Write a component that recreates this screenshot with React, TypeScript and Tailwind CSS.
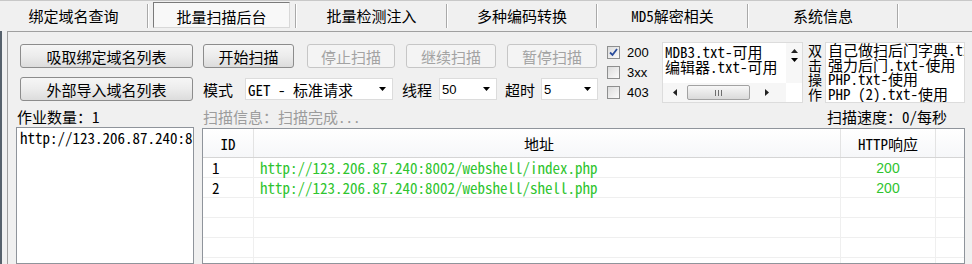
import React from 'react';

const CJK = "font-['Noto_Sans_CJK_SC',sans-serif]";
const MONO = "font-['Noto_Sans_Mono_CJK_SC','Liberation_Mono','Noto_Sans_CJK_SC',monospace]";
const SANS = "font-['Liberation_Sans','Noto_Sans_CJK_SC',sans-serif]";

function Sep() {
  return <div className="w-[2px] my-[3px] border-l border-[#a9a9a9] border-r border-r-white" />;
}

function Tab({ w, children }: { w: string; children: React.ReactNode }) {
  return (
    <div className={`${w} flex items-center justify-center pb-[2px] text-[15px] leading-none`}>{children}</div>
  );
}

function Btn({ children, disabled, w }: { children: React.ReactNode; disabled?: boolean; w: string }) {
  return (
    <div
      className={`${w} h-[24px] shrink-0 flex items-center justify-center rounded-[3px] border text-[15px] leading-none ${
        disabled
          ? 'border-[#c6c6c6] text-[#a3a3a3] bg-[#f4f4f4]'
          : 'border-[#8c8c8c] text-black bg-linear-to-b from-[#f6f6f6] via-[#ececec] to-[#dcdcdc]'
      }`}
    >
      {children}
    </div>
  );
}

function Arrow({ dir }: { dir: 'down' | 'up' | 'left' | 'right' }) {
  if (dir === 'down')
    return (
      <svg width="7" height="4" viewBox="0 0 7 4">
        <path d="M0 0H7L3.5 4Z" fill="#000" />
      </svg>
    );
  if (dir === 'up')
    return (
      <svg width="7" height="4" viewBox="0 0 7 4">
        <path d="M0 4H7L3.5 0Z" fill="#222" />
      </svg>
    );
  if (dir === 'left')
    return (
      <svg width="4" height="7" viewBox="0 0 4 7">
        <path d="M4 0V7L0 3.5Z" fill="#222" />
      </svg>
    );
  return (
    <svg width="4" height="7" viewBox="0 0 4 7">
      <path d="M0 0V7L4 3.5Z" fill="#222" />
    </svg>
  );
}

function Sel({ w, children, font }: { w: string; children: React.ReactNode; font: string }) {
  return (
    <div className={`${w} h-[22px] shrink-0 bg-white border border-[#dcdcdc] flex items-center pl-[2px] pr-[6px]`}>
      <span className={`flex-1 whitespace-nowrap ${font}`}>{children}</span>
      <Arrow dir="down" />
    </div>
  );
}

function Check({ checked, label }: { checked?: boolean; label: string }) {
  return (
    <div className="h-[20.5px] flex items-center">
      <div className="w-[13px] h-[13px] border border-[#8e8f8f] bg-linear-to-br from-[#dcdcdc] to-[#fbfbfb] flex items-center justify-center">
        {checked && (
          <svg width="9" height="9" viewBox="0 0 9 9">
            <path d="M1 4.5L3.5 7L8 1" stroke="#2a4d9c" strokeWidth="1.8" fill="none" />
          </svg>
        )}
      </div>
      <span className={`ml-[7px] text-[13px] leading-none ${SANS}`}>{label}</span>
    </div>
  );
}

export default function App() {
  return (
    <div className={`w-[972px] h-[264px] bg-[#f0f0f0] overflow-hidden flex flex-col ${CJK} text-black`}>
      {/* tab bar */}
      <div className="h-[31px] shrink-0 flex border-t border-[#c8c8c8]">
        <Tab w="w-[147px]">绑定域名查询</Tab>
        <Sep />
        <div className="w-[146px] pl-[4px] pt-[1px]">
          <div className="w-[137px] h-[26px] border-t border-l border-[#7a7a7a] border-r border-b border-r-[#d8d8d8] border-b-[#d8d8d8] bg-[#f8f8f8] flex items-center justify-center pt-[2px] text-[15px] leading-none">
            批量扫描后台
          </div>
        </div>
        <Sep />
        <Tab w="w-[149px]">批量检测注入</Tab>
        <Sep />
        <Tab w="w-[148px]">多种编码转换</Tab>
        <Sep />
        <Tab w="w-[149px]">
          <span className={MONO}>MD5</span>解密相关
        </Tab>
        <Sep />
        <Tab w="w-[148px]">系统信息</Tab>
        <Sep />
      </div>

      {/* body */}
      <div className="flex-1 min-h-0 flex">
        <div className="w-[2px] bg-[#56616c]" />
        <div className="w-[5px]" />
        <div className="flex-1 min-w-0 border-l border-t border-[#a0a0a0] pt-[10px] pl-[8px] flex flex-col">
          {/* top region */}
          <div className="h-[61px] shrink-0 flex">
            <div className="w-[178px] shrink-0 flex flex-col pt-[2px] pl-[4px] pr-[1px] gap-[9px]">
              <Btn w="w-full">吸取绑定域名列表</Btn>
              <Btn w="w-full">外部导入域名列表</Btn>
            </div>
            <div className="ml-[9px] w-[395px] shrink-0 flex flex-col pt-[2px]">
              <div className="flex">
                <Btn w="w-[91px]">开始扫描</Btn>
                <div className="w-[13px]" />
                <Btn w="w-[88px]" disabled>
                  停止扫描
                </Btn>
                <div className="w-[11px]" />
                <Btn w="w-[90px]" disabled>
                  继续扫描
                </Btn>
                <div className="w-[11px]" />
                <Btn w="w-[90px]" disabled>
                  暂停扫描
                </Btn>
              </div>
              <div className="mt-[10px] flex items-center text-[15px] leading-none">
                <span className="w-[42px] shrink-0">模式</span>
                <Sel w="w-[148px]" font={`${MONO} text-[15px]`}>
                  GET - 标准请求
                </Sel>
                <span className="ml-[9px] w-[37px] shrink-0">线程</span>
                <Sel w="w-[58px]" font={`${SANS} text-[13px]`}>
                  50
                </Sel>
                <span className="ml-[8px] w-[36px] shrink-0">超时</span>
                <Sel w="w-[57px]" font={`${SANS} text-[13px]`}>
                  5
                </Sel>
              </div>
            </div>
            <div className="ml-[9px] w-[55px] shrink-0 flex flex-col">
              <Check checked label="200" />
              <Check label="3xx" />
              <Check label="403" />
            </div>
            {/* list 1 */}
            <div className="w-[141px] shrink-0 border border-[#dcdcdc] bg-white flex flex-col">
              <div className="flex-1 min-h-0 flex">
                <div className={`flex-1 min-w-0 overflow-hidden pl-[2px] pt-[1px] text-[15px] leading-[15px] whitespace-nowrap ${MONO}`}>
                  <div>MDB3.txt-可用</div>
                  <div>编辑器.txt-可用</div>
                </div>
                <div className="w-[16px] shrink-0 bg-[#f7f7f7] flex flex-col items-center pt-[6px] gap-[5px]">
                  <Arrow dir="up" />
                  <Arrow dir="down" />
                </div>
              </div>
              <div className="h-[19px] shrink-0 flex items-center">
                <div className="w-[123px] h-full bg-[#f6f6f6] flex items-center">
                  <div className="w-[24px] flex justify-center">
                    <Arrow dir="left" />
                  </div>
                  <div className="w-[63px] h-[15px] rounded-[2px] border border-[#a2a2a2] bg-linear-to-b from-[#f7f7f7] to-[#dadada] flex items-center justify-center gap-[2px]">
                    <div className="w-px h-[6px] bg-[#6e6e6e]" />
                    <div className="w-px h-[6px] bg-[#6e6e6e]" />
                    <div className="w-px h-[6px] bg-[#6e6e6e]" />
                  </div>
                  <div className="w-[8px]" />
                  <div className="w-[18px] flex justify-center">
                    <Arrow dir="right" />
                  </div>
                </div>
              </div>
            </div>
            {/* vertical label */}
            <div className="ml-[5px] w-[15px] shrink-0 flex flex-col text-[14px] leading-[14.5px] pt-[1px]">
              <span>双</span>
              <span>击</span>
              <span>操</span>
              <span>作</span>
            </div>
            {/* list 2 */}
            <div
              className={`ml-[2px] w-[140px] shrink-0 border border-[#dcdcdc] bg-white overflow-hidden pl-[2px] text-[15px] leading-[14.6px] whitespace-nowrap ${MONO}`}
            >
              <div>自己做扫后门字典.txt-使用</div>
              <div>强力后门.txt-使用</div>
              <div>PHP.txt-使用</div>
              <div>PHP (2).txt-使用</div>
            </div>
          </div>

          {/* info row */}
          <div className="h-[23px] shrink-0 flex items-center pt-[3px] text-[15px] leading-none">
            <div className="w-[178px] shrink-0 pl-[1px]">
              作业数量：<span className={MONO}>1</span>
            </div>
            <div className="ml-[9px] text-[#9c9c9c]">
              扫描信息：扫描完成<span className={MONO}>...</span>
            </div>
            <div className="flex-1 flex justify-end pr-[25px]">
              扫描速度：<span className={MONO}>0/</span>每秒
            </div>
          </div>

          {/* bottom region */}
          <div className="flex-1 min-h-0 flex">
            <div className="w-[178px] shrink-0 mt-[1px] border border-[#8f949b] bg-white overflow-hidden pl-[3px]">
              <div className={`${MONO} text-[15px] leading-[20px] whitespace-nowrap`}>http://123.206.87.240:8002</div>
            </div>
            <div className="ml-[8px] w-[763px] shrink-0 mt-[2px] border border-[#8f949b] bg-white flex flex-col overflow-hidden">
              <div className="h-[29px] shrink-0 flex border-b border-[#d5d5d5] bg-linear-to-b from-white to-[#f6f7f9] text-[15px] leading-none">
                <div className={`w-[51px] shrink-0 border-r border-[#e3e3e3] flex items-center justify-center ${MONO}`}>ID</div>
                <div className="w-[587px] shrink-0 border-r border-[#e3e3e3] flex items-center justify-center pr-[16px]">地址</div>
                <div className="w-[95px] shrink-0 border-r border-[#e3e3e3] flex items-center justify-center">
                  <span className={MONO}>HTTP</span>响应
                </div>
                <div className="flex-1" />
              </div>
              {[
                ['1', 'http://123.206.87.240:8002/webshell/index.php', '200'],
                ['2', 'http://123.206.87.240:8002/webshell/shell.php', '200'],
                ['', '', ''],
                ['', '', ''],
                ['', '', ''],
                ['', '', ''],
              ].map((r, i) => (
                <div key={i} className="h-[20px] shrink-0 flex border-b border-[#efefef]">
                  <div className={`w-[51px] shrink-0 border-r border-[#efefef] pl-[9px] flex items-center text-[15px] leading-none ${MONO}`}>
                    {r[0]}
                  </div>
                  <div
                    className={`w-[587px] shrink-0 border-r border-[#efefef] pl-[6px] flex items-center text-[15px] leading-none text-[#2fc42f] ${MONO}`}
                  >
                    {r[1]}
                  </div>
                  <div className={`w-[95px] shrink-0 border-r border-[#efefef] flex items-center justify-center text-[14px] leading-none text-[#2fc42f] ${SANS}`}>
                    {r[2]}
                  </div>
                  <div className="flex-1" />
                </div>
              ))}
            </div>
          </div>
        </div>
      </div>
    </div>
  );
}
